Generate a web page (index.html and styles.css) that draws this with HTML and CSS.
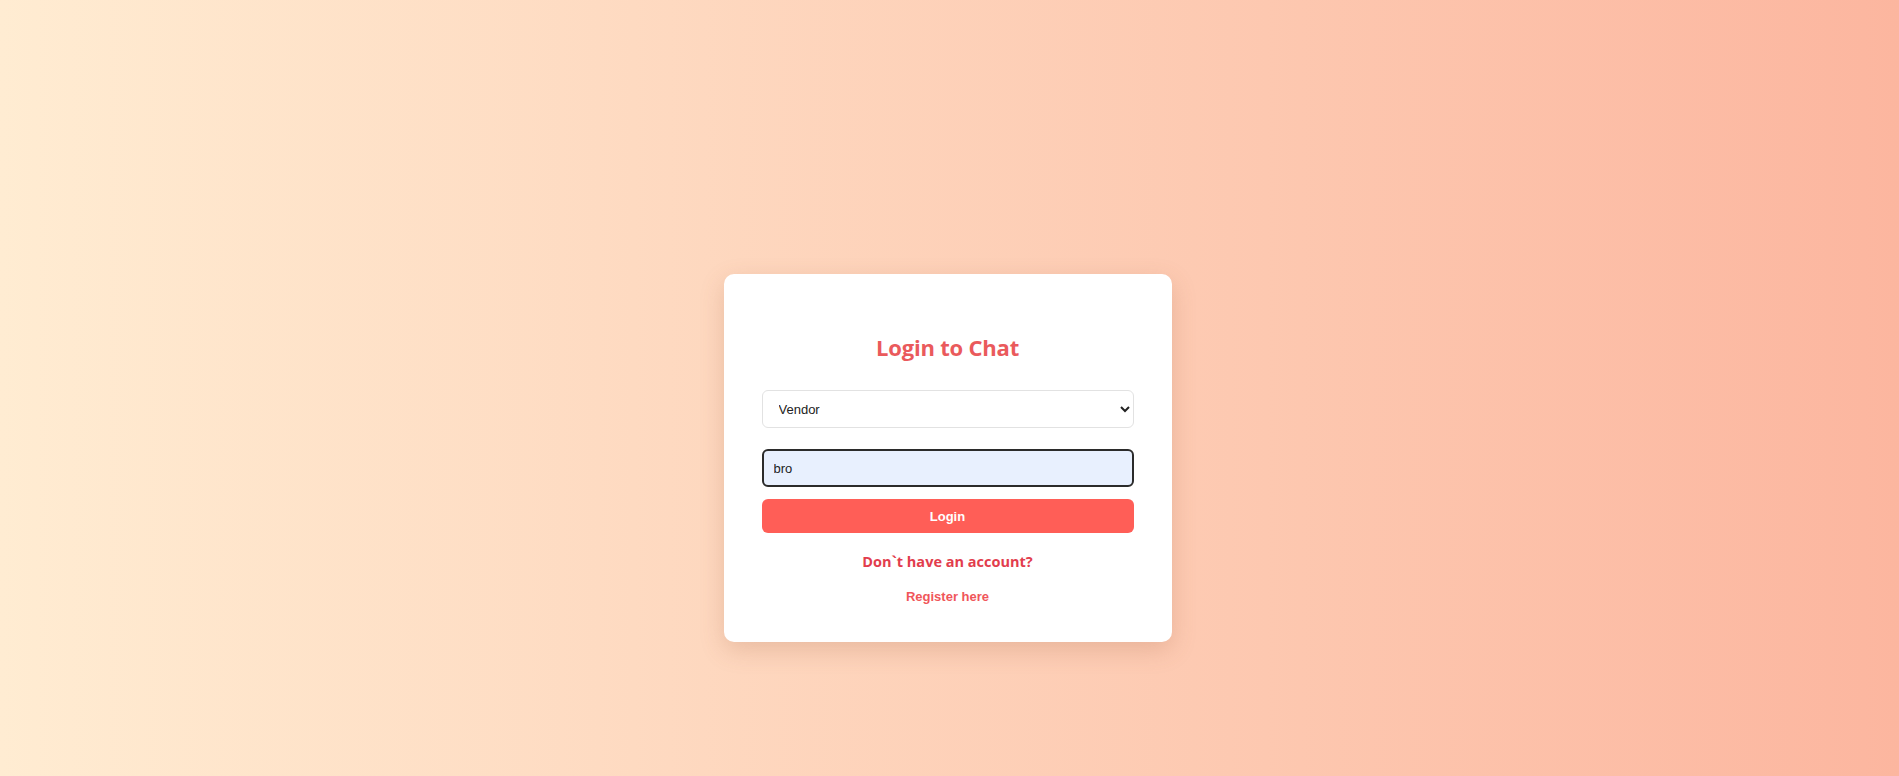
FILE: index.html
```html
<!DOCTYPE html>
<html>
<head>
<meta charset="utf-8">
<title>Login to Chat</title>
<link rel="stylesheet" href="styles.css">
</head>
<body>
<main class="page">
  <div class="card">
    <h2 class="title">Login to Chat</h2>
    <select class="field select">
      <option>Vendor</option>
      <option>Customer</option>
    </select>
    <input class="field input" type="text" value="bro">
    <button class="btn">Login</button>
    <p class="prompt">Don`t have an account?</p>
    <a class="link" href="#">Register here</a>
  </div>
</main>
</body>
</html>
```
FILE: styles.css
```css
* { box-sizing: border-box; }
html, body { margin: 0; padding: 0; }
body {
  width: 1899px;
  height: 776px;
  overflow: hidden;
  background: linear-gradient(to right, #ffecd2, #fcb69f);
  font-family: "Open Sans", "Liberation Sans", sans-serif;
}
.page {
  display: flex;
  justify-content: center;
  padding-top: 274px;
  padding-right: 4px;
}
.card {
  width: 448px;
  background: #fff;
  border-radius: 10px;
  box-shadow: 0 8px 24px rgba(160, 90, 60, 0.22);
  padding: 58px 38px 37px;
  display: flex;
  flex-direction: column;
  align-items: stretch;
}
.title {
  margin: 0 0 28px;
  text-align: center;
  font-size: 22px;
  line-height: 30px;
  font-weight: 700;
  color: #ea5a5c;
  letter-spacing: -0.2px;
}
.field {
  height: 38px;
  width: 100%;
  border-radius: 6px;
  font-family: "Liberation Sans", Arial, sans-serif;
  font-size: 13px;
  color: #222;
}
.select {
  border: 1px solid #e2e2e2;
  background: #fff;
  padding: 0 8px 0 12px;
  margin-bottom: 21px;
}
.input {
  border: 2px solid #2b2b2b;
  background: #e8f0fe;
  padding: 0 10px;
  margin-bottom: 12px;
  outline: none;
}
.btn {
  height: 34px;
  border: none;
  border-radius: 6px;
  background: #ff5e57;
  color: #fff;
  font-family: "Liberation Sans", Arial, sans-serif;
  font-weight: 700;
  font-size: 13px;
  margin-bottom: 19px;
}
.prompt {
  margin: 0 0 17px;
  text-align: center;
  font-size: 14.5px;
  line-height: 20px;
  font-weight: 700;
  color: #e23d4d;
}
.link {
  text-align: center;
  font-family: "Liberation Sans", Arial, sans-serif;
  font-size: 13px;
  line-height: 16px;
  font-weight: 700;
  color: #f0565a;
  text-decoration: none;
}
```
